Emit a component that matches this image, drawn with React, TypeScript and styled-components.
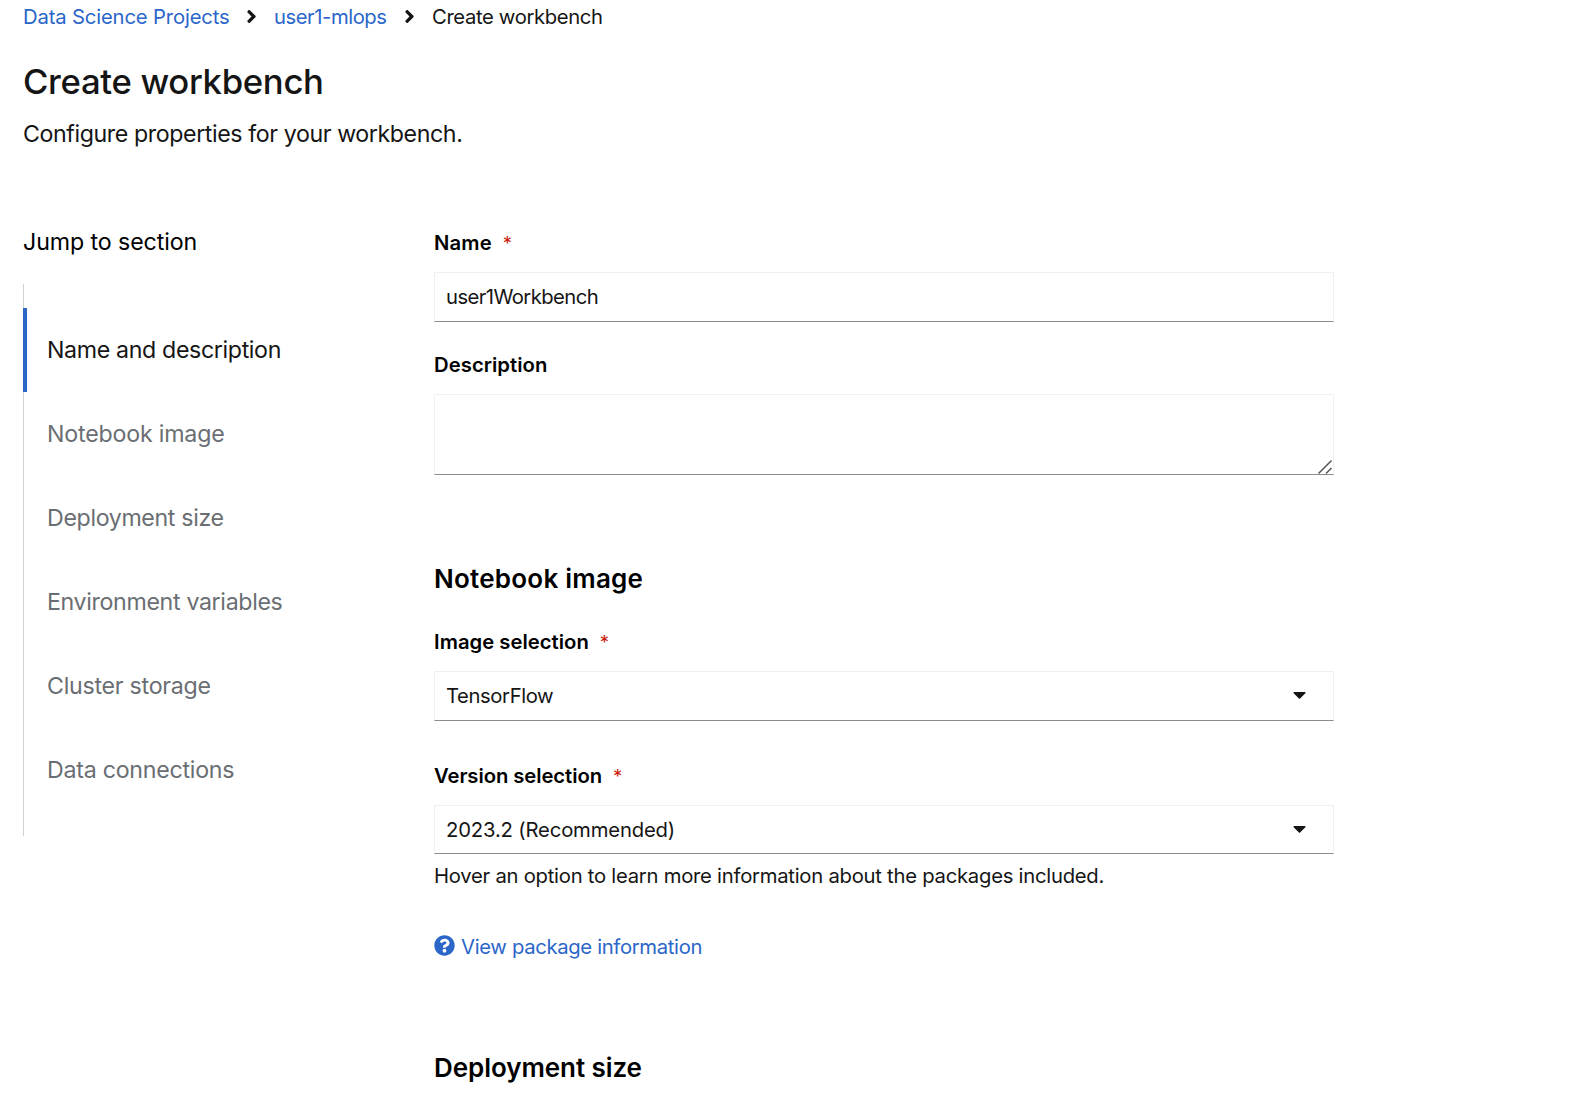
import React from 'react';
import styled, { createGlobalStyle } from 'styled-components';
import { FaAngleRight, FaCaretDown, FaQuestionCircle } from 'react-icons/fa';

const GlobalStyle = createGlobalStyle`
  *, *::before, *::after { box-sizing: border-box; }
  body {
    margin: 0;
    background: #fff;
    color: #151515;
    font-family: Inter, "Liberation Sans", sans-serif;
    font-size: 20.25px;
    overflow: hidden;
  }
`;

const Page = styled.div`
  height: 1094px;
  overflow: hidden;
  padding-left: 23px;
`;

const Text = styled.span<{ $track: number }>`
  letter-spacing: ${(p) => p.$track}px;
  white-space: nowrap;
`;

const Breadcrumb = styled.nav`
  display: flex;
  align-items: center;
  height: 33px;
  line-height: 33px;
`;

const Crumb = styled.a<{ $width?: number }>`
  color: ${(p) => (p.$width ? '#2b66c9' : '#151515')};
  width: ${(p) => (p.$width ? `${p.$width}px` : 'auto')};
  text-decoration: none;
`;

const Divider = styled.span`
  display: flex;
  justify-content: center;
  width: 45px;
  padding-bottom: 1px;
  font-size: 21px;
`;

const Title = styled.h1`
  margin: 27px 0 0;
  font-size: 34.7px;
  font-weight: 500;
  line-height: 43px;
`;

const Subtitle = styled.p`
  margin: 13px 0 72px;
  font-size: 23.2px;
  line-height: 36px;
`;

const Columns = styled.div`
  display: grid;
  grid-template-columns: 411px 900px;
  align-items: start;
`;

const JumpTitle = styled.div`
  margin-bottom: 24px;
  font-size: 23.2px;
  line-height: 36px;
  color: #000;
`;

const JumpList = styled.ul`
  margin: 0;
  padding: 24px 0;
  list-style: none;
  background: linear-gradient(#d2d2d2, #d2d2d2) 0 0 / 1px 100% no-repeat;
  font-size: 23.2px;
`;

const JumpItem = styled.li<{ $current?: boolean }>`
  height: 84px;
  line-height: 84px;
  padding-left: 20px;
  border-left: 4px solid ${(p) => (p.$current ? '#2b66c9' : 'transparent')};
  color: ${(p) => (p.$current ? '#151515' : '#6a6e73')};
`;

const Form = styled.form`
  padding-top: 3px;
`;

const Field = styled.div<{ $gap: number }>`
  margin-bottom: ${(p) => p.$gap}px;
`;

const Label = styled.label`
  display: flex;
  height: 32px;
  margin-bottom: 13px;
  line-height: 32px;
  font-weight: 600;
  color: #000;
`;

const Required = styled.span`
  margin-left: 11px;
  font-size: 18.5px;
  font-weight: 400;
  line-height: 32px;
  color: #c9190b;
`;

const Control = styled.div<{ $height: number }>`
  display: flex;
  align-items: center;
  justify-content: space-between;
  height: ${(p) => p.$height}px;
  padding: 0 23px ${(p) => p.$height - 48}px 11px;
  border: 1px solid #f0f0f0;
  border-bottom-color: #8a8d90;
`;

const Caret = styled(FaCaretDown)`
  margin-bottom: 1px;
`;

const TextArea = styled(Control)`
  align-items: flex-end;
  justify-content: flex-end;
  padding: 0;
`;

const Heading = styled.h2<{ $gap: number }>`
  margin: 0 0 ${(p) => p.$gap}px;
  font-size: 26px;
  font-weight: 600;
  line-height: 35px;
  color: #000;
`;

const Helper = styled.div`
  margin-top: 6px;
  line-height: 32px;
`;

const InfoLink = styled.a`
  display: flex;
  align-items: center;
  gap: 6px;
  height: 32px;
  margin-bottom: 87px;
  line-height: 32px;
  color: #2b66c9;
`;

const HelpIcon = styled(FaQuestionCircle)`
  margin-bottom: 3px;
`;

const sections = [
  { label: 'Name and description', track: -0.36 },
  { label: 'Notebook image', track: -0.19 },
  { label: 'Deployment size', track: -0.356 },
  { label: 'Environment variables', track: -0.346 },
  { label: 'Cluster storage', track: -0.26 },
  { label: 'Data connections', track: -0.258 },
];

function FieldLabel({ text, track, required }: { text: string; track: number; required?: boolean }) {
  return (
    <Label>
      <Text $track={track}>{text}</Text>
      {required && <Required>*</Required>}
    </Label>
  );
}

function Select({ value, track, height }: { value: string; track: number; height: number }) {
  return (
    <Control $height={height}>
      <Text $track={track}>{value}</Text>
      <Caret size={21} />
    </Control>
  );
}

export default function App() {
  return (
    <>
      <GlobalStyle />
      <Page>
        <Breadcrumb>
          <Crumb $width={206}><Text $track={-0.16}>Data Science Projects</Text></Crumb>
          <Divider><FaAngleRight /></Divider>
          <Crumb $width={113}><Text $track={-0.453}>user1-mlops</Text></Crumb>
          <Divider><FaAngleRight /></Divider>
          <Crumb><Text $track={-0.368}>Create workbench</Text></Crumb>
        </Breadcrumb>
        <Title><Text $track={-0.318}>Create workbench</Text></Title>
        <Subtitle><Text $track={-0.405}>Configure properties for your workbench.</Text></Subtitle>
        <Columns>
          <nav>
            <JumpTitle><Text $track={-0.09}>Jump to section</Text></JumpTitle>
            <JumpList>
              {sections.map((s, i) => (
                <JumpItem key={s.label} $current={i === 0}>
                  <Text $track={s.track}>{s.label}</Text>
                </JumpItem>
              ))}
            </JumpList>
          </nav>
          <Form>
            <Field $gap={27}>
              <FieldLabel text="Name" track={0.15} required />
              <Control $height={50}><Text $track={-0.58}>user1Workbench</Text></Control>
            </Field>
            <Field $gap={86}>
              <FieldLabel text="Description" track={0.053} />
              <TextArea $height={81}>
                <svg width="15" height="15" viewBox="0 0 15 15" fill="none" stroke="#555" strokeWidth="1.5">
                  <path d="M.5 14.5 13.5 1.5M8 14.5 13.5 9" />
                </svg>
              </TextArea>
            </Field>
            <Heading $gap={30}><Text $track={0.235}>Notebook image</Text></Heading>
            <Field $gap={39}>
              <FieldLabel text="Image selection" track={0.02} required />
              <Select value="TensorFlow" track={-0.4} height={50} />
            </Field>
            <Field $gap={39}>
              <FieldLabel text="Version selection" track={-0.07} required />
              <Select value="2023.2 (Recommended)" track={-0.16} height={49} />
              <Helper>
                <Text $track={-0.25}>Hover an option to learn more information about the packages included.</Text>
              </Helper>
            </Field>
            <InfoLink>
              <HelpIcon size={21} />
              <Text $track={-0.335}>View package information</Text>
            </InfoLink>
            <Heading $gap={0}><Text $track={-0.07}>Deployment size</Text></Heading>
          </Form>
        </Columns>
      </Page>
    </>
  );
}
